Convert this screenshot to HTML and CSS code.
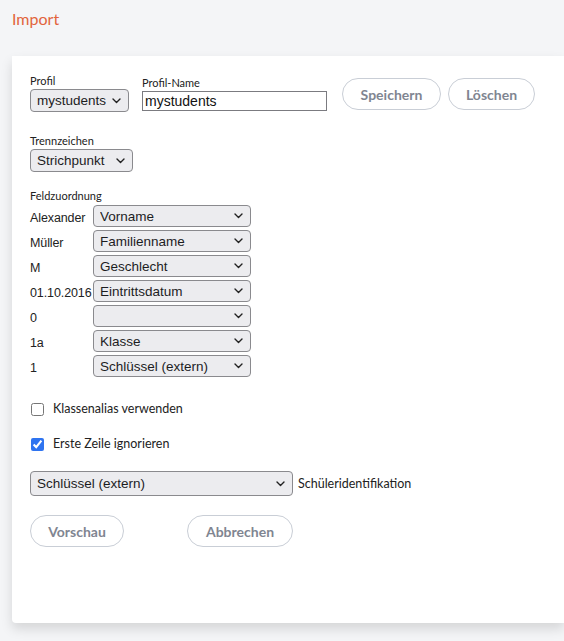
FILE: index.html
```html
<!DOCTYPE html>
<html lang="de">
<head>
  <meta charset="UTF-8">
  <meta name="viewport" content="width=device-width, initial-scale=1.0">
  <title>Import</title>
  <link rel="stylesheet" href="styles.css">
</head>
<body>

<!-- Page title -->
<h1 class="title">Import</h1>

<!-- Import form card -->
<div class="card">

  <!-- Profile row -->
  <div class="profile-row">
    <div class="field">
      <label class="small-label">Profil</label>
      <select class="select select-profile">
        <option>mystudents</option>
      </select>
    </div>
    <div class="field field-name">
      <label class="small-label">Profil-Name</label>
      <input type="text" class="text-input" value="mystudents">
    </div>
    <button class="pill-btn btn-save">Speichern</button>
    <button class="pill-btn btn-delete">Löschen</button>
  </div>

  <!-- Separator -->
  <div class="field section-sep">
    <label class="small-label">Trennzeichen</label>
    <select class="select select-sep">
      <option>Strichpunkt</option>
    </select>
  </div>

  <!-- Field mapping -->
  <div class="section-map">
    <label class="small-label">Feldzuordnung</label>
    <div class="map-grid">
      <span class="map-value">Alexander</span>
      <select class="select"><option>Vorname</option></select>
      <span class="map-value">Müller</span>
      <select class="select"><option>Familienname</option></select>
      <span class="map-value">M</span>
      <select class="select"><option>Geschlecht</option></select>
      <span class="map-value">01.10.2016</span>
      <select class="select"><option>Eintrittsdatum</option></select>
      <span class="map-value">0</span>
      <select class="select"><option></option></select>
      <span class="map-value">1a</span>
      <select class="select"><option>Klasse</option></select>
      <span class="map-value">1</span>
      <select class="select"><option>Schlüssel (extern)</option></select>
    </div>
  </div>

  <!-- Options -->
  <label class="check-row check-first">
    <input type="checkbox" class="checkbox">
    <span>Klassenalias verwenden</span>
  </label>
  <label class="check-row">
    <input type="checkbox" class="checkbox" checked>
    <span>Erste Zeile ignorieren</span>
  </label>

  <div class="ident-row">
    <select class="select select-ident">
      <option>Schlüssel (extern)</option>
    </select>
    <span class="ident-label">Schüleridentifikation</span>
  </div>

  <!-- Actions -->
  <div class="actions">
    <button class="pill-btn btn-preview">Vorschau</button>
    <button class="pill-btn btn-cancel">Abbrechen</button>
  </div>

</div>

</body>
</html>
```

FILE: styles.css
```css
/* General */
* {
  box-sizing: border-box;
}

body {
  margin: 0;
  min-height: 641px;
  background-color: #f4f5f7;
  font-family: "Liberation Sans", Arial, sans-serif;
  color: #1d1d1f;
  overflow: hidden;
}

/* Title */
.title {
  margin: 0;
  padding: 9px 12px 0;
  height: 56px;
  font-family: Lato, "Open Sans", sans-serif;
  font-weight: 400;
  font-size: 16px;
  color: #e2643c;
}

/* Card */
.card {
  margin-left: 12px;
  padding: 18px 0 76px 18px;
  background-color: #fff;
  border-radius: 0 0 0 4px;
  box-shadow: 0 6px 12px rgba(0, 0, 0, 0.13);
}

.small-label {
  display: block;
  height: 15px;
  font-family: Lato, "Open Sans", sans-serif;
  font-size: 11px;
  line-height: 14px;
  color: #222;
}

/* Selects */
.select {
  appearance: none;
  -webkit-appearance: none;
  height: 23px;
  margin: 0;
  padding: 0 22px 0 6px;
  border: 1px solid #8a8a8e;
  border-radius: 4px;
  background-color: #ececef;
  background-image: url("data:image/svg+xml,%3Csvg xmlns='http://www.w3.org/2000/svg' width='9' height='6' viewBox='0 0 9 6'%3E%3Cpath d='M1 1l3.5 3.5L8 1' fill='none' stroke='%23222' stroke-width='1.4' stroke-linecap='round' stroke-linejoin='round'/%3E%3C/svg%3E");
  background-repeat: no-repeat;
  background-position: right 7px center;
  font-family: "Liberation Sans", Arial, sans-serif;
  font-size: 13.5px;
  color: #1d1d1f;
}

/* Profile row */
.profile-row {
  display: flex;
  align-items: flex-start;
}

.select-profile {
  width: 99px;
}

.field-name {
  margin-left: 13px;
  padding-top: 2px;
}

.text-input {
  display: block;
  width: 185px;
  height: 20px;
  margin: 0;
  padding: 0 2px;
  border: 1px solid #7b7b80;
  font-family: "Liberation Sans", Arial, sans-serif;
  font-size: 14px;
  color: #111;
}

.pill-btn {
  height: 32px;
  border: 1px solid #c9ced6;
  border-radius: 16px;
  background-color: #fff;
  font-family: Lato, "Open Sans", sans-serif;
  font-weight: 700;
  font-size: 14px;
  color: #7f8591;
}

.btn-save {
  width: 99px;
  margin: 4px 0 0 15px;
}

.btn-delete {
  width: 87px;
  margin: 4px 0 0 7px;
}

/* Separator */
.section-sep {
  margin-top: 22px;
}

.select-sep {
  width: 103px;
}

/* Field mapping */
.section-map {
  margin-top: 17px;
}

.section-map .small-label {
  margin-bottom: 1px;
}

.map-grid {
  display: grid;
  grid-template-columns: 63px 158px;
  row-gap: 3px;
  align-items: center;
}

.map-grid .select {
  height: 22px;
}

.map-value {
  padding-top: 3px;
  font-size: 12.5px;
  letter-spacing: -0.1px;
  color: #222;
}

/* Checkboxes */
.check-row {
  display: flex;
  align-items: center;
  height: 16px;
  margin-top: 19px;
  font-family: Lato, "Open Sans", sans-serif;
  font-size: 12.5px;
  color: #222;
}

.check-first {
  margin-top: 23px;
}

.checkbox {
  width: 13px;
  height: 13px;
  margin: 2px 9px 0 1px;
  accent-color: #2f74f0;
}

/* Identification */
.ident-row {
  display: flex;
  align-items: center;
  margin-top: 20px;
}

.select-ident {
  width: 263px;
  height: 25px;
}

.ident-label {
  margin-left: 5px;
  font-family: Lato, "Open Sans", sans-serif;
  font-size: 12.5px;
  color: #222;
}

/* Actions */
.actions {
  display: flex;
  margin-top: 19px;
}

.btn-preview {
  width: 94px;
}

.btn-cancel {
  width: 106px;
  margin-left: 63px;
}
```
